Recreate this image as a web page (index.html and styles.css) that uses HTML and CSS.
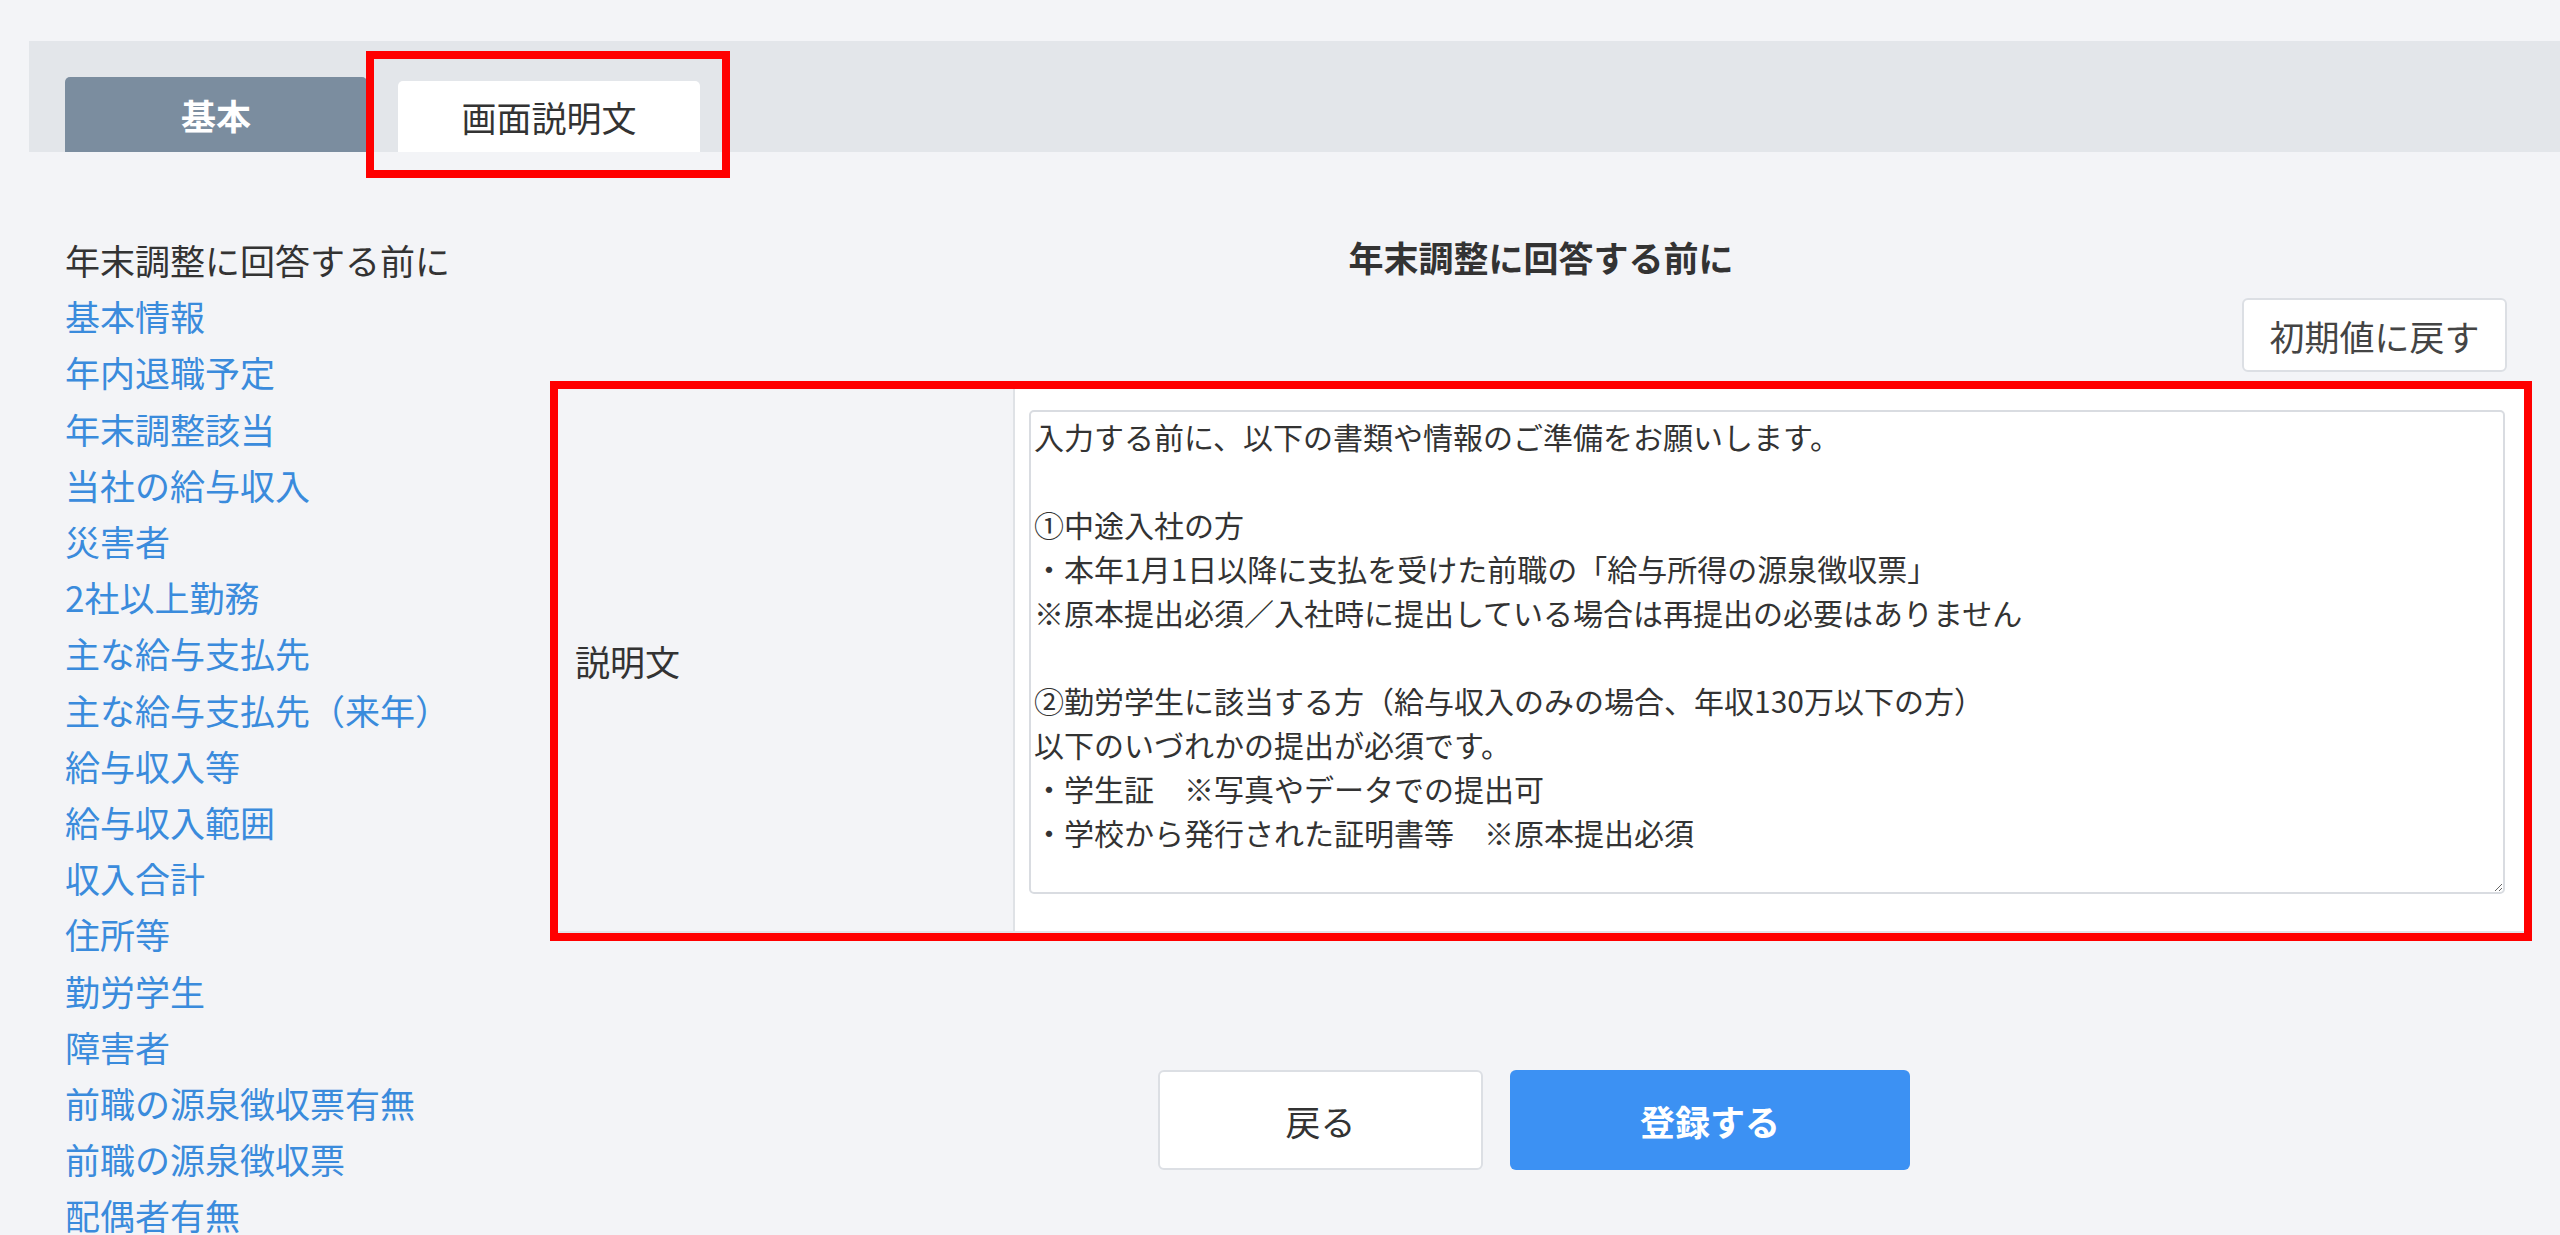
FILE: index.html
```html
<!DOCTYPE html>
<html lang="ja">
<head>
<meta charset="utf-8">
<title>画面説明文</title>
<link rel="stylesheet" href="styles.css">
</head>
<body>
<div class="page">
  <div class="tabbar">
    <div class="tab tab-basic">基本</div>
    <div class="tab tab-active">画面説明文</div>
    <div class="annot annot-tab"></div>
  </div>
  <div class="content">
    <nav class="sidenav">
      <span class="nav-item nav-current">年末調整に回答する前に</span>
      <a class="nav-item" href="#">基本情報</a>
      <a class="nav-item" href="#">年内退職予定</a>
      <a class="nav-item" href="#">年末調整該当</a>
      <a class="nav-item" href="#">当社の給与収入</a>
      <a class="nav-item" href="#">災害者</a>
      <a class="nav-item" href="#">2社以上勤務</a>
      <a class="nav-item" href="#">主な給与支払先</a>
      <a class="nav-item" href="#">主な給与支払先（来年）</a>
      <a class="nav-item" href="#">給与収入等</a>
      <a class="nav-item" href="#">給与収入範囲</a>
      <a class="nav-item" href="#">収入合計</a>
      <a class="nav-item" href="#">住所等</a>
      <a class="nav-item" href="#">勤労学生</a>
      <a class="nav-item" href="#">障害者</a>
      <a class="nav-item" href="#">前職の源泉徴収票有無</a>
      <a class="nav-item" href="#">前職の源泉徴収票</a>
      <a class="nav-item" href="#">配偶者有無</a>
    </nav>
    <main class="main">
      <h2 class="title">年末調整に回答する前に</h2>
      <div class="toolbar"><button class="btn btn-reset" type="button">初期値に戻す</button></div>
      <div class="highlight">
        <div class="form-row">
          <div class="label-cell">説明文</div>
          <div class="value-cell"><textarea class="desc">入力する前に、以下の書類や情報のご準備をお願いします。

①中途入社の方
・本年1月1日以降に支払を受けた前職の「給与所得の源泉徴収票」
※原本提出必須／入社時に提出している場合は再提出の必要はありません

②勤労学生に該当する方（給与収入のみの場合、年収130万以下の方）
以下のいづれかの提出が必須です。
・学生証　※写真やデータでの提出可
・学校から発行された証明書等　※原本提出必須</textarea></div>
        </div>
      </div>
      <div class="actions">
        <button class="btn btn-back" type="button">戻る</button>
        <button class="btn btn-submit" type="button">登録する</button>
      </div>
    </main>
  </div>
</div>
</body>
</html>
```

FILE: styles.css
```css
html, body {
  margin: 0;
  padding: 0;
}
body {
  background: #f3f4f7;
  font-family: "Noto Sans CJK JP", "Noto Sans", sans-serif;
  color: #333;
  overflow: hidden;
}
.page {
  width: 2560px;
  height: 1235px;
}
.tabbar {
  position: relative;
  margin: 41px 0 0 29px;
  height: 111px;
  background: #e3e6ea;
  display: flex;
  align-items: flex-end;
  padding-left: 36px;
  gap: 31px;
  box-sizing: border-box;
}
.tab {
  width: 302px;
  display: flex;
  align-items: center;
  justify-content: center;
  font-size: 35px;
  border-radius: 5px 5px 0 0;
}
.tab-basic {
  height: 75px;
  background: #7b8d9f;
  color: #fff;
  font-weight: 700;
}
.tab-active {
  height: 71px;
  background: #fff;
  color: #333;
}
.annot {
  position: absolute;
  border: 8px solid #ff0000;
  box-sizing: border-box;
  pointer-events: none;
}
.annot-tab {
  left: 337px;
  top: 10px;
  width: 364px;
  height: 127px;
}
.content {
  display: flex;
  padding: 77px 0 0 65px;
}
.sidenav {
  width: 485px;
  display: flex;
  flex-direction: column;
  padding-top: 3px;
}
.nav-item {
  font-size: 35px;
  line-height: 56.2px;
  white-space: nowrap;
  color: #3a8bdc;
  text-decoration: none;
}
.nav-current {
  color: #333;
}
.main {
  width: 1982px;
  display: flex;
  flex-direction: column;
}
.title {
  margin: 0;
  font-size: 35px;
  line-height: 56px;
  font-weight: 700;
  text-align: center;
  color: #333;
}
.toolbar {
  display: flex;
  justify-content: flex-end;
  margin-top: 13px;
  padding-right: 25px;
}
.btn {
  font-family: "Noto Sans CJK JP", "Noto Sans", sans-serif;
  font-size: 35px;
  border-radius: 6px;
  box-sizing: border-box;
  cursor: pointer;
}
.btn-reset {
  width: 265px;
  height: 74px;
  background: #fff;
  border: 2px solid #dcdfe4;
  color: #444;
  padding: 0;
}
.highlight {
  margin-top: 9px;
  border: 8px solid #ff0000;
}
.form-row {
  display: flex;
  border-bottom: 2px solid #e3e5e9;
}
.label-cell {
  width: 457px;
  flex-shrink: 0;
  box-sizing: border-box;
  background: #f3f4f7;
  border-right: 2px solid #dfe2e6;
  padding-left: 17px;
  display: flex;
  align-items: center;
  font-size: 35px;
  color: #333;
}
.value-cell {
  flex: 1;
  background: #fff;
  padding: 21px 19px 37px 14px;
}
.desc {
  display: block;
  width: 100%;
  height: 484px;
  box-sizing: border-box;
  border: 2px solid #d9dce1;
  border-radius: 5px;
  padding: 2px 3px;
  margin: 0;
  font-family: "Noto Sans CJK JP", "Noto Sans", sans-serif;
  font-size: 30px;
  line-height: 44px;
  color: #333;
  background: #fff;
  resize: both;
}
.actions {
  display: flex;
  justify-content: center;
  gap: 27px;
  margin-top: 129px;
  padding-right: 14px;
}
.btn-back {
  width: 325px;
  height: 100px;
  background: #fff;
  border: 2px solid #dcdfe4;
  color: #333;
}
.btn-submit {
  width: 400px;
  height: 100px;
  background: #3c91f3;
  border: none;
  color: #fff;
  font-weight: 700;
}
```
